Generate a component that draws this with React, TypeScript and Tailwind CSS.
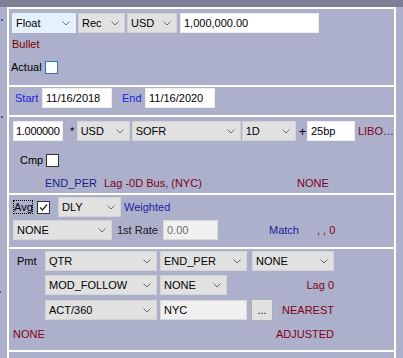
import { ReactNode } from "react"

const font = { fontFamily: '"Liberation Sans", Arial, sans-serif' }

function Chevron() {
    return (
        <svg width="8" height="5" viewBox="0 0 8 5" className="shrink-0">
            <polyline points="0.5,0.5 4,4 7.5,0.5" fill="none" stroke="#6b6b6b" strokeWidth="1" />
        </svg>
    )
}

function Select({ w, label, hover = false }: { w: string; label: string; hover?: boolean }) {
    return (
        <div
            className={`${w} h-[20px] shrink-0 flex items-center justify-between pl-[3px] pr-[5px] border ${
                hover ? "bg-[#E5F1FB] border-[#E5F1FB]" : "bg-[#E1E1E1] border-[#D4D4D4]"
            } text-black`}
        >
            <span>{label}</span>
            <Chevron />
        </div>
    )
}

function Input({ w, value, disabled = false, grey = false, className = "" }: { w: string; value: string; disabled?: boolean; grey?: boolean; className?: string }) {
    return (
        <div
            className={`${w} h-[20px] shrink-0 flex items-center pl-[3px] border whitespace-nowrap ${
                disabled || grey ? "bg-[#F0F0F0] border-[#D9D9D9]" : "bg-white border-[#EDEDED]"
            } ${disabled ? "text-[#6D6D6D]" : "text-black"} ${className}`}
        >
            {value}
        </div>
    )
}

function Check({ checked = false, hover = false }: { checked?: boolean; hover?: boolean }) {
    return (
        <div
            className={`w-[13px] h-[13px] shrink-0 bg-white border flex items-center justify-center ${
                hover ? "border-[#2F6FC0]" : "border-[#333333]"
            }`}
        >
            {checked && (
                <svg width="9" height="9" viewBox="0 0 9 9">
                    <polyline points="1,4.5 3.5,7 8,1.5" fill="none" stroke="#222" strokeWidth="1.2" />
                </svg>
            )}
        </div>
    )
}

function Section({ h, children }: { h: string; children: ReactNode }) {
    return <div className={`${h} shrink-0 border-t-2 border-white overflow-hidden`}>{children}</div>
}

export default function App() {
    return (
        <div className="w-[403px] h-[358px] bg-[#ACB0CA] flex flex-col overflow-hidden text-[11px] leading-[15px]" style={font}>
            {/* top bar */}
            <div className="h-[7px] shrink-0 bg-[#7C7F96]" />

            <div className="flex flex-1">
                {/* left strip with clipped markers */}
                <div className="w-[7px] shrink-0 flex flex-col">
                    <div className="mt-[12px] ml-[1px] w-[2px] h-[2px] bg-[#3A4FD0]" />
                    <div className="mt-[95px] ml-[1px] w-[2px] h-[2px] bg-[#3A4FD0]" />
                    <div className="mt-[173px] w-[1px] h-[2px] bg-[#3A4FD0]" />
                </div>

                <div className="w-[389px] shrink-0 border-x-2 border-white flex flex-col">
                    {/* notional */}
                    <Section h="h-[78px]">
                        <div className="flex mt-[4px] ml-[3px]">
                            <Select w="w-[64px]" label="Float" hover />
                            <div className="ml-[2px]"><Select w="w-[47px]" label="Rec" /></div>
                            <div className="ml-[2px]"><Select w="w-[50px]" label="USD" /></div>
                            <div className="ml-[3px]"><Input w="w-[139px]" value="1,000,000.00" /></div>
                        </div>
                        <div className="mt-[4px] ml-[3px] text-[#800000]">Bullet</div>
                        <div className="flex items-center mt-[8px] ml-[2px]">
                            <span className="w-[34px]">Actual</span>
                            <Check hover />
                        </div>
                    </Section>

                    {/* dates */}
                    <Section h="h-[30px]">
                        <div className="flex items-center mt-[1px] ml-[6px]">
                            <span className="w-[27px] text-[#1E1EE0]">Start</span>
                            <Input w="w-[70px]" value="11/16/2018" />
                            <span className="w-[33px] pl-[10px] text-[#1E1EE0]">End</span>
                            <Input w="w-[70px]" value="11/16/2020" />
                        </div>
                    </Section>

                    {/* index */}
                    <Section h="h-[78px]">
                        <div className="flex items-center mt-[4px] ml-[4px]">
                            <Input w="w-[50px]" value="1.000000" className="!pl-[2px] tracking-[-0.3px]" />
                            <span className="w-[15px] pl-[7px]">*</span>
                            <Select w="w-[53px]" label="USD" />
                            <div className="ml-[2px]"><Select w="w-[109px]" label="SOFR" /></div>
                            <div className="ml-[1px]"><Select w="w-[54px]" label="1D" /></div>
                            <span className="w-[13px] pl-[3px] text-[13px]">+</span>
                            <Input w="w-[48px]" value="25bp" />
                            <span className="ml-[3px] text-[#800020] whitespace-nowrap">LIBO…</span>
                        </div>
                        <div className="flex items-center mt-[12px] ml-[11px]">
                            <span className="w-[26px]">Cmp</span>
                            <Check />
                        </div>
                        <div className="flex mt-[8px] ml-[36px]">
                            <span className="w-[59px] text-[#1C1C8C]">END_PER</span>
                            <span className="w-[193px] text-[#800020]">Lag -0D Bus, (NYC)</span>
                            <span className="text-[#800020]">NONE</span>
                        </div>
                    </Section>

                    {/* averaging */}
                    <Section h="h-[54px]">
                        <div className="flex items-center mt-[2px] ml-[4px]">
                            <span className="w-[20px] h-[14px] leading-[12px] border border-dotted border-black">Avg</span>
                            <div className="ml-[4px]"><Check checked /></div>
                            <div className="ml-[8px]"><Select w="w-[63px]" label="DLY" /></div>
                            <span className="ml-[3px] text-[#2020A8]">Weighted</span>
                        </div>
                        <div className="flex items-center mt-[3px] ml-[4px]">
                            <Select w="w-[99px]" label="NONE" />
                            <span className="w-[51px] pl-[5px] text-[#1A1A1A]">1st Rate</span>
                            <Input w="w-[55px]" value="0.00" disabled />
                            <span className="ml-[51px] w-[48px] text-[#1C1C9C]">Match</span>
                            <span className="text-[#800020]">, , 0</span>
                        </div>
                    </Section>

                    {/* payment */}
                    <Section h="h-[103px]">
                        <div className="flex items-center mt-[2px] ml-[8px]">
                            <span className="w-[28px]">Pmt</span>
                            <Select w="w-[112px]" label="QTR" />
                            <div className="ml-[3px]"><Select w="w-[87px]" label="END_PER" /></div>
                            <div className="ml-[5px]"><Select w="w-[82px]" label="NONE" /></div>
                        </div>
                        <div className="flex items-center w-[325px] mt-[4px] pl-[36px]">
                            <Select w="w-[112px]" label="MOD_FOLLOW" />
                            <div className="ml-[3px]"><Select w="w-[67px]" label="NONE" /></div>
                            <span className="flex-1 text-right text-[#800020]">Lag 0</span>
                        </div>
                        <div className="flex items-center w-[325px] mt-[4px] pl-[36px]">
                            <Select w="w-[112px]" label="ACT/360" />
                            <div className="ml-[3px]"><Input w="w-[87px]" value="NYC" grey /></div>
                            <div className="ml-[4px] w-[22px] h-[22px] flex items-center justify-center bg-[#E1E1E1] border border-[#ADADAD] text-black">...</div>
                            <span className="flex-1 text-right text-[#800020]">NEAREST</span>
                        </div>
                        <div className="flex w-[325px] mt-[6px] pl-[4px] text-[#800020]">
                            <span>NONE</span>
                            <span className="flex-1 text-right">ADJUSTED</span>
                        </div>
                    </Section>

                    <Section h="h-[20px]">
                        <div />
                    </Section>
                </div>
            </div>
        </div>
    )
}
